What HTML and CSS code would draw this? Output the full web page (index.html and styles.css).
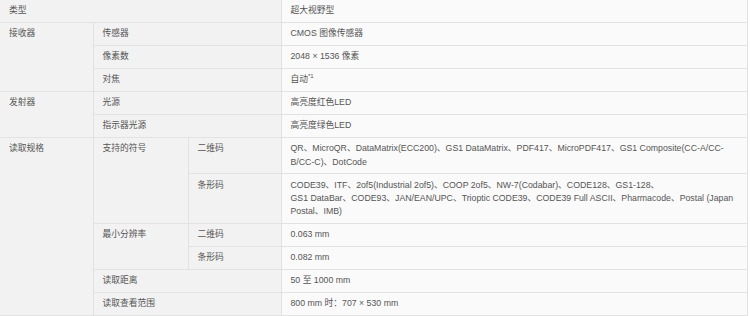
FILE: index.html
```html
<!DOCTYPE html>
<html lang="zh-CN">
<head>
<meta charset="utf-8">
<title>规格</title>
<link rel="stylesheet" href="styles.css">
</head>
<body>
<table class="spec">
  <colgroup>
    <col class="c1"><col class="c2"><col class="c3"><col class="c4">
  </colgroup>
  <tbody>
    <tr><th colspan="3">类型</th><td>超大视野型</td></tr>
    <tr><th rowspan="3">接收器</th><th colspan="2">传感器</th><td>CMOS 图像传感器</td></tr>
    <tr><th colspan="2">像素数</th><td>2048 × 1536 像素</td></tr>
    <tr><th colspan="2">对焦</th><td>自动<sup>*1</sup></td></tr>
    <tr><th rowspan="2">发射器</th><th colspan="2">光源</th><td>高亮度红色LED</td></tr>
    <tr><th colspan="2">指示器光源</th><td>高亮度绿色LED</td></tr>
    <tr><th rowspan="6">读取规格</th><th rowspan="2">支持的符号</th><th>二维码</th><td>QR、MicroQR、DataMatrix(ECC200)、GS1 DataMatrix、PDF417、MicroPDF417、GS1 Composite(CC-A/CC-B/CC-C)、DotCode</td></tr>
    <tr><th>条形码</th><td>CODE39、ITF、2of5(Industrial 2of5)、COOP 2of5、NW-7(Codabar)、CODE128、GS1-128、<br>GS1 DataBar、CODE93、JAN/EAN/UPC、Trioptic CODE39、CODE39 Full ASCII、Pharmacode、Postal (Japan Postal、IMB)</td></tr>
    <tr><th rowspan="2">最小分辨率</th><th>二维码</th><td>0.063 mm</td></tr>
    <tr><th>条形码</th><td>0.082 mm</td></tr>
    <tr><th colspan="2">读取距离</th><td>50 至 1000 mm</td></tr>
    <tr><th colspan="2">读取查看范围</th><td>800 mm 时：707 × 530 mm</td></tr>
  </tbody>
</table>
</body>
</html>
```
FILE: styles.css
```css
html, body {
  margin: 0;
  padding: 0;
  background: #ffffff;
}
body {
  font-family: "Liberation Sans", Arial, "Noto Sans CJK SC", sans-serif;
  font-size: 8.75px;
  color: #555555;
}
.spec {
  width: 748px;
  border-collapse: collapse;
  table-layout: fixed;
}
.c1 { width: 93px; }
.c2 { width: 95px; }
.c3 { width: 93px; }
.spec th,
.spec td {
  border: 1px solid #e2e2e2;
  padding: 4.33px 9px;
  line-height: 13.33px;
  text-align: left;
  vertical-align: top;
  font-weight: normal;
}
.spec tr:first-child th,
.spec tr:first-child td {
  border-top: 0;
}
.spec th {
  background: #f2f2f2;
}
.spec td {
  background: #fafafa;
}
.spec th:first-child {
  border-left: 0;
}
.spec sup {
  font-size: 6px;
  line-height: 0;
  vertical-align: 4px;
}
```
